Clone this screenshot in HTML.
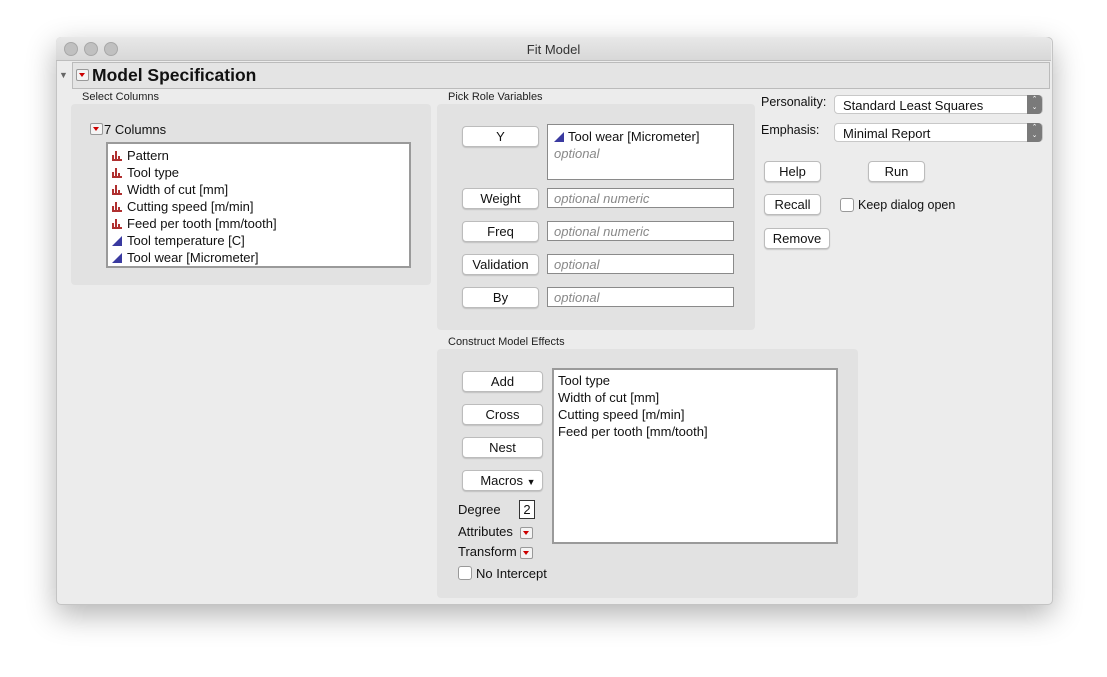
<!DOCTYPE html>
<html><head><style>
body{margin:0;width:1107px;height:677px;background:#fff;position:relative;font-family:"Liberation Sans",sans-serif;font-size:13px;color:#111;overflow:hidden}
.a{position:absolute}
.win{left:56px;top:37px;width:995px;height:566px;background:#ececec;border:1px solid #c4c4c4;border-radius:5px;box-shadow:0 10px 30px rgba(0,0,0,.3)}
.tb{left:56px;top:37px;width:995px;height:23px;background:linear-gradient(#e8e8e8,#d8d8d8);border-bottom:1px solid #bdbdbd;border-radius:5px 5px 0 0}
.dot{width:12px;height:12px;border-radius:50%;background:#c0c0c0;border:1px solid #a8a8a8;top:42px}
.pn{background:#e2e2e2;border-radius:4px}
.btn{background:#fff;border:1px solid #bcbcbc;border-radius:4px;box-shadow:0 1px 1px rgba(0,0,0,.15);text-align:center;height:19px;line-height:19px;font-size:13px}
.fld{background:#fff;border:1px solid #8a8a8a;height:20px;line-height:20px;padding-left:6px;box-sizing:border-box;color:#888;font-style:italic;font-size:13px}
.rt{width:11px;height:10px;border:1px solid #999;background:#f4f4f4;border-radius:2px}
.rt:after{content:"";position:absolute;left:2px;top:3px;border-left:3.5px solid transparent;border-right:3.5px solid transparent;border-top:4px solid #c00}
.lab{font-size:11px;color:#222}
.ic{display:inline-block;width:10px;height:10px;vertical-align:-1px;margin-right:5px}
.cb{width:12px;height:12px;border:1px solid #999;background:#fff;border-radius:3px}
.sel{background:#fff;border:1px solid #c8c8c8;border-radius:4px;height:19px;line-height:19px;padding-left:8px;box-sizing:border-box;font-size:13px}
.sel:after{content:"\2303\A\2304";white-space:pre;position:absolute;right:0;top:-1px;width:15px;height:19px;background:#7a7a7a;color:#fff;font-size:7px;line-height:8px;text-align:center;border-radius:0 4px 4px 0;padding-top:1px;box-sizing:border-box}
</style></head><body>
<div class="a win"></div>
<div class="a tb"></div>
<div class="a dot" style="left:64px"></div><div class="a dot" style="left:84px"></div><div class="a dot" style="left:104px"></div>
<div class="a" style="left:0;width:1107px;top:42px;text-align:center;font-size:13px;color:#333">Fit Model</div>
<div class="a" style="left:59px;top:70px;font-size:9px;color:#666">▼</div>
<div class="a" style="left:72px;top:62px;width:978px;height:27px;background:#e4e4e4;border:1px solid #bbb;box-sizing:border-box"></div>
<div class="a rt" style="left:76px;top:69px"></div>
<div class="a" style="left:92px;top:64px;font-size:17.5px;font-weight:bold;line-height:22px">Model Specification</div>

<div class="a lab" style="left:82px;top:91px">Select Columns</div>
<div class="a pn" style="left:71px;top:104px;width:360px;height:181px"></div>
<div class="a rt" style="left:90px;top:123px"></div>
<div class="a" style="left:104px;top:122px;font-size:13px">7 Columns</div>
<div class="a" style="left:106px;top:142px;width:305px;height:126px;background:#fff;border:2px solid #9a9a9a;box-sizing:border-box;padding:3px 0 0 4px;line-height:17px;font-size:13px">
<div><svg class="ic" viewBox="0 0 10 10"><path d="M0 4h2v6H0zM3 0h2v10H3zM6 5h2v5H6zM0 8h10v2H0z" fill="#b03030"/></svg>Pattern</div>
<div><svg class="ic" viewBox="0 0 10 10"><path d="M0 4h2v6H0zM3 0h2v10H3zM6 5h2v5H6zM0 8h10v2H0z" fill="#b03030"/></svg>Tool type</div>
<div><svg class="ic" viewBox="0 0 10 10"><path d="M0 4h2v6H0zM3 0h2v10H3zM6 5h2v5H6zM0 8h10v2H0z" fill="#b03030"/></svg>Width of cut [mm]</div>
<div><svg class="ic" viewBox="0 0 10 10"><path d="M0 4h2v6H0zM3 0h2v10H3zM6 5h2v5H6zM0 8h10v2H0z" fill="#b03030"/></svg>Cutting speed [m/min]</div>
<div><svg class="ic" viewBox="0 0 10 10"><path d="M0 4h2v6H0zM3 0h2v10H3zM6 5h2v5H6zM0 8h10v2H0z" fill="#b03030"/></svg>Feed per tooth [mm/tooth]</div>
<div><svg class="ic" viewBox="0 0 10 10"><path d="M0 10L10 0V10z" fill="#3a3aa0"/></svg>Tool temperature [C]</div>
<div><svg class="ic" viewBox="0 0 10 10"><path d="M0 10L10 0V10z" fill="#3a3aa0"/></svg>Tool wear [Micrometer]</div>
</div>

<div class="a lab" style="left:448px;top:91px">Pick Role Variables</div>
<div class="a pn" style="left:437px;top:104px;width:318px;height:226px"></div>
<div class="a btn" style="left:462px;top:126px;width:75px">Y</div>
<div class="a" style="left:547px;top:124px;width:187px;height:56px;background:#fff;border:1px solid #8a8a8a;box-sizing:border-box;padding:3px 0 0 6px;line-height:17px">
<div style="font-size:13px"><svg class="ic" style="margin-right:4px" viewBox="0 0 10 10"><path d="M0 10L10 0V10z" fill="#3a3aa0"/></svg>Tool wear [Micrometer]</div>
<div style="color:#888;font-style:italic">optional</div></div>
<div class="a btn" style="left:462px;top:188px;width:75px">Weight</div>
<div class="a fld" style="left:547px;top:188px;width:187px">optional numeric</div>
<div class="a btn" style="left:462px;top:221px;width:75px">Freq</div>
<div class="a fld" style="left:547px;top:221px;width:187px">optional numeric</div>
<div class="a btn" style="left:462px;top:254px;width:75px">Validation</div>
<div class="a fld" style="left:547px;top:254px;width:187px">optional</div>
<div class="a btn" style="left:462px;top:287px;width:75px">By</div>
<div class="a fld" style="left:547px;top:287px;width:187px">optional</div>

<div class="a" style="left:761px;top:95px;font-size:12.5px">Personality:</div>
<div class="a sel" style="left:834px;top:95px;width:209px">Standard Least Squares</div>
<div class="a" style="left:761px;top:123px;font-size:12.5px">Emphasis:</div>
<div class="a sel" style="left:834px;top:123px;width:209px">Minimal Report</div>
<div class="a btn" style="left:764px;top:161px;width:55px">Help</div>
<div class="a btn" style="left:868px;top:161px;width:55px">Run</div>
<div class="a btn" style="left:764px;top:194px;width:55px">Recall</div>
<div class="a cb" style="left:840px;top:198px"></div>
<div class="a" style="left:858px;top:198px;font-size:12.5px">Keep dialog open</div>
<div class="a btn" style="left:764px;top:228px;width:64px">Remove</div>

<div class="a lab" style="left:448px;top:336px">Construct Model Effects</div>
<div class="a pn" style="left:437px;top:349px;width:421px;height:249px"></div>
<div class="a btn" style="left:462px;top:371px;width:79px">Add</div>
<div class="a btn" style="left:462px;top:404px;width:79px">Cross</div>
<div class="a btn" style="left:462px;top:437px;width:79px">Nest</div>
<div class="a btn" style="left:462px;top:470px;width:79px">&nbsp;&nbsp;&nbsp;Macros <span style="font-size:9px">▼</span></div>
<div class="a" style="left:458px;top:502px;font-size:13px">Degree</div>
<div class="a" style="left:519px;top:500px;width:16px;height:19px;border:1px solid #333;background:#fff;text-align:center;line-height:18px;box-sizing:border-box">2</div>
<div class="a" style="left:458px;top:524px;font-size:13px">Attributes</div>
<div class="a rt" style="left:520px;top:527px"></div>
<div class="a" style="left:458px;top:544px;font-size:13px">Transform</div>
<div class="a rt" style="left:520px;top:547px"></div>
<div class="a cb" style="left:458px;top:566px"></div>
<div class="a" style="left:476px;top:566px;font-size:13px">No Intercept</div>
<div class="a" style="left:552px;top:368px;width:286px;height:176px;background:#fff;border:2px solid #9a9a9a;box-sizing:border-box;padding:2px 0 0 4px;line-height:17px;font-size:13px">
<div>Tool type</div><div>Width of cut [mm]</div><div>Cutting speed [m/min]</div><div>Feed per tooth [mm/tooth]</div></div>
</body></html>
